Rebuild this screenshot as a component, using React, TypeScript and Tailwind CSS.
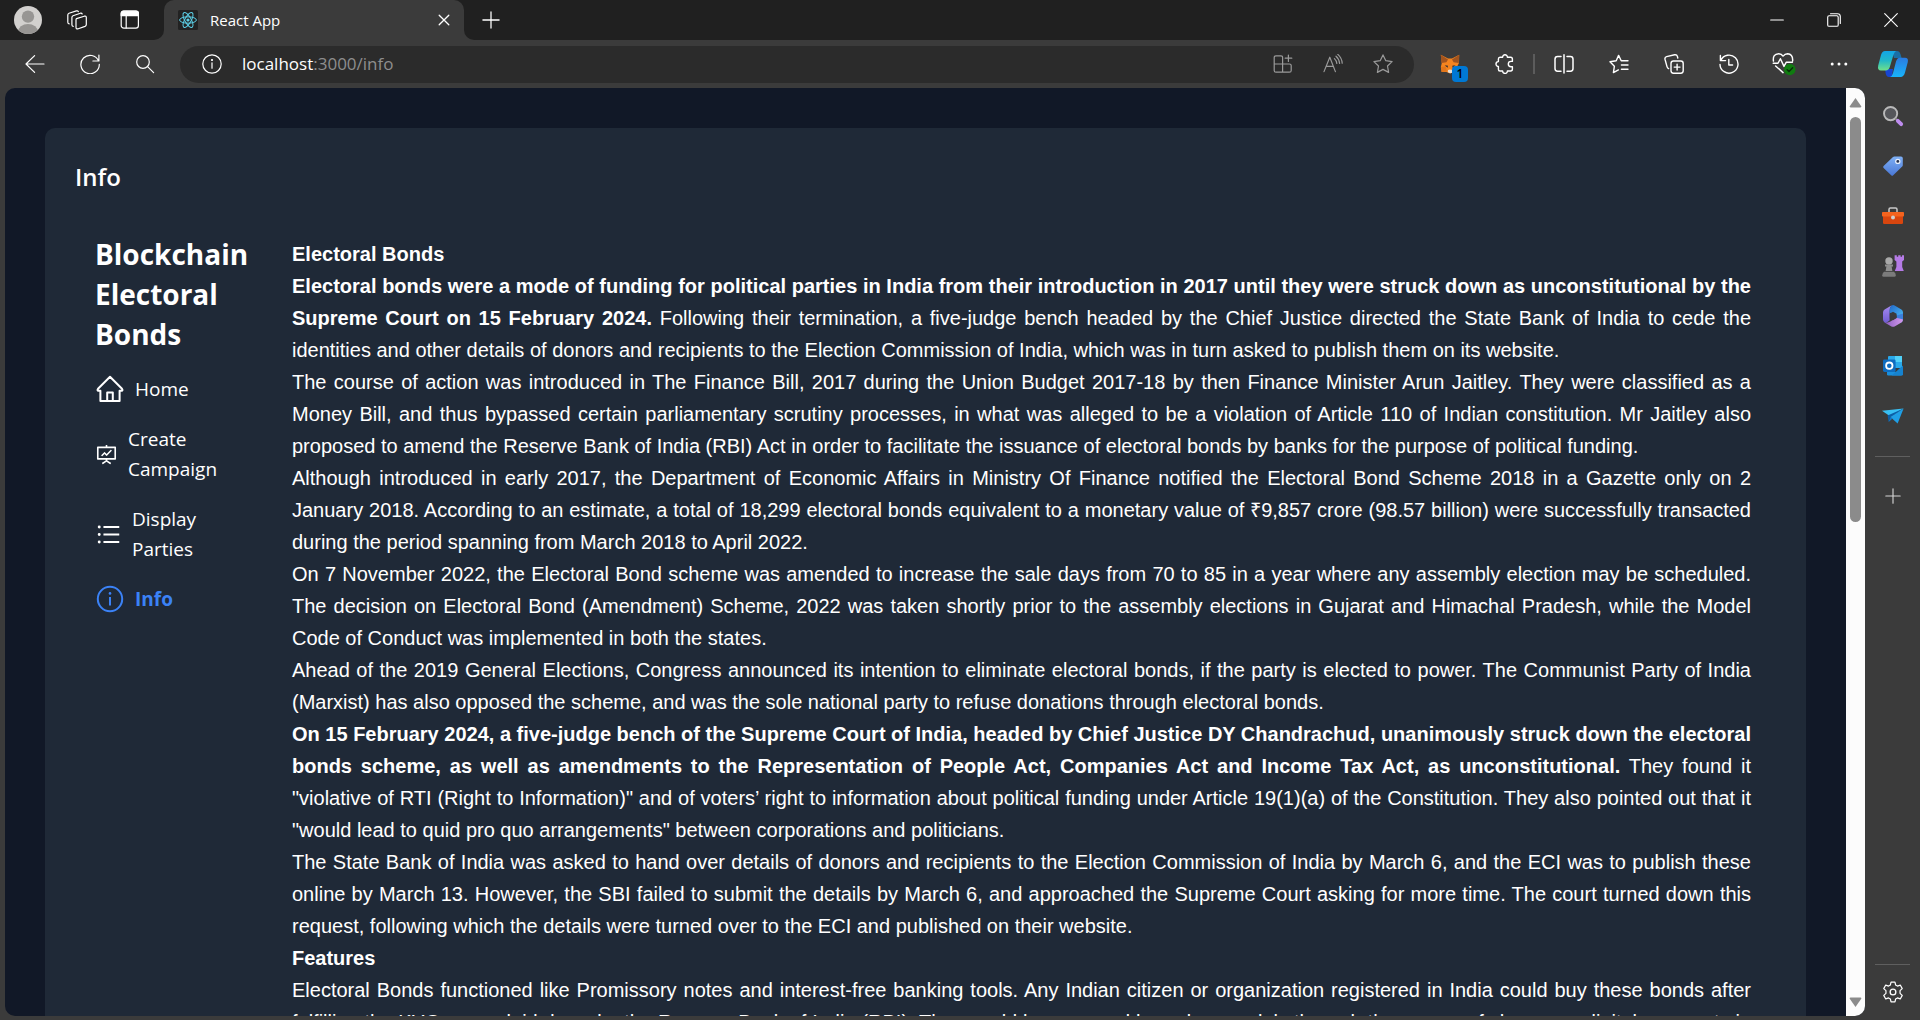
import React from "react";
import {
  AiOutlineFundProjectionScreen,
  AiOutlineUnorderedList,
} from "react-icons/ai";

type IconProps = { size?: number; className?: string; children: React.ReactNode };

function Icon({ size = 20, className = "", children }: IconProps) {
  return (
    <svg
      width={size}
      height={size}
      viewBox="0 0 20 20"
      fill="none"
      stroke="currentColor"
      strokeWidth={1.2}
      strokeLinecap="round"
      strokeLinejoin="round"
      className={`shrink-0 ${className}`}
      aria-hidden="true"
    >
      {children}
    </svg>
  );
}

const WorkspacesIcon = () => (
  <Icon>
    <path d="M9.5 8.6 17.2 6.2Q19.3 5.6 19.3 7.6V14.6Q19.3 15.9 18 16.4L11.3 18.8Q9 19.5 9 17.3V9.8Q9 8.9 9.5 8.6Z" />
    <path d="M6.2 16.4Q4.9 16.2 4.9 14.8V7.4Q4.9 6.2 6 5.7L13.4 3.2Q14.8 2.9 15.2 4" />
    <path d="M2.2 13.8Q.8 13.5.8 12.2V5Q.8 3.8 2 3.3L9.4.9Q10.8.5 11.3 1.6" />
  </Icon>
);

const TabActionsIcon = () => (
  <Icon>
    <rect x="1.2" y="1.2" width="17.2" height="17" rx="2.6" />
    <path d="M1.2 5.6V3.6A2.4 2.4 0 0 1 3.6 1.2H16A2.4 2.4 0 0 1 18.4 3.6V5.6Z" fill="currentColor" />
    <path d="M6.2 5.6V18" />
  </Icon>
);

const ReactLogo = () => (
  <svg width="20" height="20" viewBox="0 0 20 20" fill="none" stroke="#5ccfe6" strokeWidth="1" aria-hidden="true">
    <rect width="20" height="20" rx="1.5" fill="#222" stroke="none" />
    <ellipse cx="10" cy="10" rx="8.4" ry="3.2" />
    <ellipse cx="10" cy="10" rx="8.4" ry="3.2" transform="rotate(60 10 10)" />
    <ellipse cx="10" cy="10" rx="8.4" ry="3.2" transform="rotate(120 10 10)" />
    <circle cx="10" cy="10" r="1.6" fill="#5ccfe6" stroke="none" />
  </svg>
);

const BackIcon = () => (
  <Icon>
    <path d="M19 10H1M9.6 1.6 1 10l8.6 8.4" />
  </Icon>
);

const RefreshIcon = () => (
  <Icon>
    <path d="M18.6 7A9.2 9.2 0 1 0 19.3 10.4M18.9 1v6h-6" />
  </Icon>
);

const SearchIcon = () => (
  <Icon>
    <circle cx="8" cy="8" r="6.3" />
    <path d="m12.6 12.6 6 6" />
  </Icon>
);

const SiteInfoIcon = () => (
  <Icon>
    <circle cx="10" cy="10" r="9.2" />
    <path d="M10 8.8v5.4" />
    <circle cx="10" cy="6" r=".5" fill="currentColor" />
  </Icon>
);

const AppGridIcon = () => (
  <Icon>
    <path d="M9.6 10V3.4Q9.6 1.8 8 1.8H3Q1.2 1.8 1.2 3.6V16.4Q1.2 18.2 3 18.2H16.4Q18.2 18.2 18.2 16.4V11.6Q18.2 10 16.4 10H1.2M9.6 10V18.2" />
    <path d="M15.4 1V7.4M12.2 4.2H18.8" />
  </Icon>
);

const ReadAloudIcon = () => (
  <Icon>
    <path d="M1 17.6 6.8 3.2 12.4 17.6M3 12.4H10.5" />
    <path d="M11.4 4.6Q13.6 6.6 13.8 9.4M13 2.2Q16.2 5 16.6 9.4M14.8.4Q18.8 4 19.2 9.2" />
  </Icon>
);

const StarIcon = () => (
  <Icon>
    <path d="m10 .9 2.8 5.8 6.3.9-4.6 4.4 1.1 6.4-5.6-3-5.6 3 1.1-6.4L.9 7.6l6.3-.9Z" />
  </Icon>
);

const FoxIcon = () => (
  <svg width="20" height="20" viewBox="0 0 20 20" aria-hidden="true">
    <path d="M.8.8 8 4.6H12L19.2.8 19 9 17.2 12.5 18 17 13 18.5 10 19.4 6.5 18 1.6 18 .8 13 1.8 9Z" fill="#f5841f" />
    <path d="M.8.8 8 5.6 6.4 8.2 1.4 9ZM19.2.8 12 5.6 13.6 8.2 18.8 9Z" fill="#a2541f" />
    <path d="m4.6 11.4 3 .2.4 2.2ZM15.6 11.4l-3 .2-.4 2.2Z" fill="#2b2b35" />
    <path d="m8 16 2-.6 2.4.6.4 2.4-2.6.8-2.4-.9Z" fill="#e9dfd3" />
    <path d="M1 13 5.6 12.6 7 17.6 1.6 18Z" fill="#e2761b" />
  </svg>
);

const PuzzleIcon = () => (
  <Icon>
    <path
      strokeWidth="1.4"
      d="M7.6 3.2A2.4 2.4 0 1 1 12.4 3.2H15.6Q17.4 3.2 17.4 5V7.4H16A2.7 2.7 0 0 0 16 12.8H17.4V15Q17.4 17 15.6 17H12.4A2.4 2.4 0 1 1 7.6 17H5Q3.4 17 3.4 15.2V12.4A2.4 2.4 0 1 1 3.4 7.6V5Q3.4 3.2 5 3.2Z"
    />
  </Icon>
);

const SplitIcon = () => (
  <Icon>
    <path strokeWidth="1.5" d="M7 2.6H3.6Q1 2.6 1 5.2V14.6Q1 17.2 3.6 17.2H7M13 2.6H16.4Q19 2.6 19 5.2V14.6Q19 17.2 16.4 17.2H13M10 .8V19" />
  </Icon>
);

const FavoritesIcon = () => (
  <Icon>
    <path d="M12.2 6.8 9.6 1.4 7.2 6.8 1 7.8 5.4 12.2 4.4 18.6 9.4 15.9M12.4 6.8H19M12.4 11H19M12.4 15.2H19" strokeWidth="1.4" />
  </Icon>
);

const CollectionsIcon = () => (
  <Icon>
    <rect x="7" y="7" width="12.2" height="12.2" rx="2.4" strokeWidth="1.4" />
    <path d="M13.1 10.2V16M10.2 13.1H16M4.6 14.6Q3.4 14 3 12.6L1 5.2Q.6 3.2 2.6 2.6L10.6.8Q12.8.4 13.4 2.4L13.8 4" strokeWidth="1.4" />
  </Icon>
);

const HistoryIcon = () => (
  <Icon>
    <path d="M1.8 6.4A9 9 0 1 1 1 10.4M1.4 1.4V6.6H6.6M9.8 5.4V11H13.6" strokeWidth="1.4" />
  </Icon>
);

const HealthIcon = () => (
  <Icon size={24}>
    <path d="M1.2 7.6Q.4 1.6 5.6 1.4 8 1.4 9.2 3.4 10.8 1.4 13 1.4 17.6 1.8 17.2 7.4M3 11.6 9.2 17.2M1 9.4H5L7 5.6 10 12 11.8 8.6H17" />
    <circle cx="14.8" cy="14.6" r="4.8" fill="#107c10" stroke="none" />
    <path d="m12.6 14.8 1.6 1.5 3-3.2" stroke="#0a2e0a" />
  </Icon>
);

const MoreIcon = () => (
  <Icon>
    <g fill="currentColor" stroke="none">
      <circle cx="3.2" cy="10" r="1.5" />
      <circle cx="10" cy="10" r="1.5" />
      <circle cx="16.8" cy="10" r="1.5" />
    </g>
  </Icon>
);

const CopilotIcon = () => (
  <svg width="32" height="28" viewBox="0 0 32 28" aria-hidden="true">
    <defs>
      <linearGradient id="cpA" x1="0" y1="0" x2="0" y2="1">
        <stop offset="0" stopColor="#12a5e8" />
        <stop offset=".5" stopColor="#22b8c8" />
        <stop offset="1" stopColor="#6fe08a" />
      </linearGradient>
      <linearGradient id="cpB" x1="0" y1="0" x2="0" y2="1">
        <stop offset="0" stopColor="#2b7be0" />
        <stop offset="1" stopColor="#18b4fb" />
      </linearGradient>
    </defs>
    <path d="M15 1H20Q22.6 1 23.6 4.4L24.6 8H17Z" fill="#1a6fa6" />
    <path d="M8 19H16L14.8 27H12Q9.6 27 8.8 24Z" fill="#1746d2" />
    <path d="M8 1H19Q17.4 2 16.4 5L12.8 17Q11.8 20.4 8.8 20.4H4Q.2 20.4 1.2 15.4L4 5Q5.2 1 8 1Z" fill="url(#cpA)" />
    <path d="M22.6 7.8H28Q31.6 7.8 30.8 12L28 22.6Q26.8 27 23.6 27H13Q15.2 26.2 16 23L19 11.6Q20.2 8 22.6 7.8Z" fill="url(#cpB)" />
  </svg>
);

const SideSearchIcon = () => (
  <svg width="22" height="22" viewBox="0 0 22 22" fill="none" aria-hidden="true">
    <circle cx="8.6" cy="8.6" r="6.6" stroke="#b9b9b9" strokeWidth="1.9" fill="#55565a" />
    <path d="m13.4 13.4 2 2" stroke="#8a8a8a" strokeWidth="1.6" />
    <path d="m15.8 15.8 3.4 3.4" stroke="#bf8df0" strokeWidth="3.8" strokeLinecap="round" />
  </svg>
);

const TagIcon = () => (
  <svg width="22" height="22" viewBox="0 0 22 22" aria-hidden="true">
    <defs>
      <linearGradient id="tag" x1="0" y1="0" x2="0" y2="1">
        <stop offset="0" stopColor="#7fb0f5" />
        <stop offset="1" stopColor="#4a78d6" />
      </linearGradient>
    </defs>
    <path d="M12.4 1.4H19Q20.8 1.4 20.8 3.2V10Q20.8 11 20.2 11.6L11.2 20.2Q10.2 21.2 9.2 20.2L1.6 13Q.6 12 1.6 11L11 2Q11.6 1.4 12.4 1.4Z" fill="url(#tag)" />
    <circle cx="15.8" cy="6.4" r="2.7" fill="#e6eefb" />
    <circle cx="15.8" cy="6.4" r="1.4" fill="#26324f" />
  </svg>
);

const ToolboxIcon = () => (
  <svg width="22" height="20" viewBox="0 0 22 20" aria-hidden="true">
    <path d="M7 6V3.4Q7 2 8.4 2H13.6Q15 2 15 3.4V6" fill="none" stroke="#c9c9c9" strokeWidth="1.5" />
    <rect x="1" y="9" width="20" height="9" rx="1.2" fill="#d8460f" />
    <rect x="0" y="6" width="22" height="4.6" rx=".8" fill="#f4631e" />
    <circle cx="11" cy="11.4" r="2" fill="#cfcfcf" />
  </svg>
);

const GamesIcon = () => (
  <svg width="22" height="24" viewBox="0 0 22 24" aria-hidden="true">
    <path d="M12.6 1.2H14.8V2.8H16.2V1.2H18.6V2.8H20V1.2H22V6L20.2 7.6V13L21.8 17H12.8L14.4 13V7.6L12.6 6Z" fill="#b57be6" />
    <circle cx="7" cy="7" r="3.7" fill="#a9a9a9" />
    <path d="M3 10.6H11V12.4H9.6L10.4 17H3.6L4.4 12.4H3Z" fill="#8f8f8f" />
    <path d="M2 17.8H12Q14 19.4 13.8 21.4 13.6 22.8 12.4 22.8H1.6Q.2 22.8.2 21.4.4 19 2 17.8Z" fill="#7b7b7b" />
  </svg>
);

const M365Icon = () => (
  <svg width="22" height="24" viewBox="0 0 22 24" aria-hidden="true">
    <defs>
      <linearGradient id="mA" x1="0" y1="0" x2="0" y2="1">
        <stop offset="0" stopColor="#a58af0" />
        <stop offset="1" stopColor="#6f5bd0" />
      </linearGradient>
      <linearGradient id="mB" x1="0" y1="0" x2="1" y2="1">
        <stop offset="0" stopColor="#2068c8" />
        <stop offset="1" stopColor="#4fc0f6" />
      </linearGradient>
      <linearGradient id="mC" x1="0" y1="0" x2="1" y2="0">
        <stop offset="0" stopColor="#8a5cc0" />
        <stop offset="1" stopColor="#d49aec" />
      </linearGradient>
    </defs>
    <path d="M9.4 1.6 2.6 5.6Q1 6.6 1 8.4V15.6Q1 17.4 2.6 18.4L4 19 7.6 16.6V7Q7.6 3.6 9.4 1.6Z" fill="url(#mA)" />
    <path d="M9.4 1.6Q11 .6 12.6 1.4L19.4 5.4Q21 6.4 21 8.4V15.4L18.8 13.4 7.6 8.4V7Q7.6 3.6 9.4 1.6Z" fill="url(#mB)" />
    <path d="M14.6 11.4 21 9.6V15.6Q21 17.4 19.4 18.4L16 18.4 14.6 16Z" fill="#3c7fdc" />
    <path d="M2.6 18.4 9.4 22.4Q11 23.2 12.6 22.4L19.4 18.4Q21 17.4 21 15.4L14.6 13.8 8.4 17.6Q5.4 19.2 2.6 18.4Z" fill="url(#mC)" />
    <path d="M7.8 9.6 11 7.8 14.6 9.8V14L11 16.2 7.8 14.4Z" fill="#3b3b3b" />
  </svg>
);

const OutlookIcon = () => (
  <svg width="22" height="22" viewBox="0 0 22 22" aria-hidden="true">
    <rect x="6" y="1" width="14" height="12" rx="1" fill="#2aa9ea" />
    <rect x="13" y="1" width="7" height="6" fill="#50d0f8" />
    <path d="M5 12 20 20.4H6.2Q5 20.4 5 19.2Z" fill="#1a8fdc" />
    <path d="M21 10.6V19.2Q21 20.4 19.8 20.4H9.6Z" fill="#1683d0" />
    <rect x="1" y="4.4" width="12.6" height="12.6" rx="1.4" fill="#0f6cbf" />
    <circle cx="7.3" cy="10.7" r="3.2" fill="none" stroke="#fff" strokeWidth="1.8" />
  </svg>
);

const PlaneIcon = () => (
  <svg width="22" height="16" viewBox="0 0 22 16" aria-hidden="true">
    <path d="M0 2.8 21.6.4 8 8.2Z" fill="#38c0f4" />
    <path d="M5.6 7.4 21.6.4 8 9.4 6.6 14Z" fill="#0b5ea8" />
    <path d="M8.4 9 21.6.4 15.6 15.6Z" fill="#1f9fe6" />
    <path d="m6.6 14 4-3.4-2.4-1.6Z" fill="#1277c4" />
  </svg>
);

const GearIcon = () => (
  <Icon size={22}>
    <path
      strokeWidth="1.1"
      d="M8.2 1h3.6l.6 2.7 1.6.9 2.6-.9 1.8 3.2-2 1.9v2.4l2 1.9-1.8 3.2-2.6-.9-1.6.9-.6 2.7H8.2l-.6-2.7-1.6-.9-2.6.9-1.8-3.2 2-1.9V8.8l-2-1.9 1.8-3.2 2.6.9 1.6-.9Z"
    />
    <circle cx="10" cy="10" r="2.6" />
  </Icon>
);

const PlusIcon = ({ size = 18 }: { size?: number }) => (
  <Icon size={size}>
    <path d="M10 1v18M1 10h18" strokeWidth="1.4" />
  </Icon>
);

const HomeIcon = () => (
  <svg width="30" height="30" viewBox="0 0 30 30" fill="none" stroke="currentColor" strokeWidth="2" strokeLinejoin="round" className="shrink-0" aria-hidden="true">
    <path d="M5.4 27V16.8H3.6Q1.8 16.4 3 14.8L15 2.8 27 14.8Q28.2 16.4 26.4 16.8H24.6V27Z" />
    <path d="M12.2 27V18.6H17.8V27" />
  </svg>
);

const InfoIcon = () => (
  <svg width="30" height="30" viewBox="0 0 30 30" fill="none" stroke="currentColor" strokeWidth="2" className="shrink-0" aria-hidden="true">
    <circle cx="15" cy="15" r="12.2" />
    <path d="M15 13V21.4" />
    <circle cx="15" cy="9.4" r="1.3" fill="currentColor" stroke="none" />
  </svg>
);

function ToolButton({ label, children }: { label: string; children: React.ReactNode }) {
  return (
    <button type="button" aria-label={label} className="flex h-10 w-[55px] shrink-0 items-center justify-center">
      {children}
    </button>
  );
}

function TabStrip() {
  return (
    <header className="flex h-10 shrink-0 items-stretch bg-[#3b3b3b] text-white">
      <div className="flex w-[164px] items-center rounded-br-[10px] bg-[#202020] pl-[14px]">
        <button type="button" aria-label="Profile">
          <svg width="28" height="28" viewBox="0 0 28 28" aria-hidden="true">
            <defs>
              <clipPath id="avatar">
                <circle cx="14" cy="14" r="14" />
              </clipPath>
            </defs>
            <g clipPath="url(#avatar)">
              <rect width="28" height="28" fill="#d2d0ce" />
              <circle cx="14" cy="10.6" r="6.2" fill="#979593" />
              <ellipse cx="14" cy="26" rx="10" ry="8" fill="#979593" />
            </g>
          </svg>
        </button>
        <button type="button" aria-label="Workspaces" className="ml-[25px]">
          <WorkspacesIcon />
        </button>
        <button type="button" aria-label="Tab actions" className="ml-[33px]">
          <TabActionsIcon />
        </button>
      </div>
      <div className="w-[300px] bg-[#202020]">
        <div className="flex h-full items-center rounded-t-[10px] bg-[#3b3b3b] pr-[12px] pl-[14px]">
          <ReactLogo />
          <span className="ml-3 flex-1 text-[15px]">React App</span>
          <button type="button" aria-label="Close tab" className="flex size-4 items-center justify-center">
            <Icon size={12}>
              <path d="m2 2 16 16M18 2 2 18" strokeWidth="2.2" />
            </Icon>
          </button>
        </div>
      </div>
      <div className="flex flex-1 rounded-bl-[10px] bg-[#202020]">
        <button type="button" aria-label="New tab" className="flex w-[54px] items-center justify-center">
          <PlusIcon />
        </button>
        <div className="ml-auto flex">
          <button type="button" aria-label="Minimize" className="flex w-[57px] items-center justify-center">
            <Icon size={14}>
              <path d="M1 10h18" strokeWidth="1.6" />
            </Icon>
          </button>
          <button type="button" aria-label="Restore" className="flex w-[57px] items-center justify-center">
            <Icon size={14}>
              <rect x="1" y="4" width="15" height="15" rx="2" strokeWidth="1.6" />
              <path d="M5 1H15Q19 1 19 5V15" strokeWidth="1.6" />
            </Icon>
          </button>
          <button type="button" aria-label="Close" className="flex w-[58px] items-center justify-center">
            <Icon size={14}>
              <path d="m1 1 18 18M19 1 1 19" strokeWidth="1.6" />
            </Icon>
          </button>
        </div>
      </div>
    </header>
  );
}

function Toolbar() {
  return (
    <div className="flex h-12 shrink-0 items-center pl-[7px] text-white">
      <ToolButton label="Back">
        <BackIcon />
      </ToolButton>
      <ToolButton label="Refresh">
        <RefreshIcon />
      </ToolButton>
      <ToolButton label="Search">
        <SearchIcon />
      </ToolButton>
      <div className="ml-2 flex h-[37px] min-w-0 flex-1 items-center rounded-full bg-[#2b2b2b] pr-[6px] pl-[22px]">
        <button type="button" aria-label="Site information">
          <SiteInfoIcon />
        </button>
        <a href="#url" className="ml-5 flex-1 text-[17px] text-[#8e8e8e]">
          <span className="text-white">localhost</span>:3000/info
        </a>
        <div className="flex text-[#9a9a9a]">
          <button type="button" aria-label="App available" className="flex w-[50px] justify-center">
            <AppGridIcon />
          </button>
          <button type="button" aria-label="Read aloud" className="flex w-[50px] justify-center">
            <ReadAloudIcon />
          </button>
          <button type="button" aria-label="Add to favorites" className="flex w-[50px] justify-center">
            <StarIcon />
          </button>
        </div>
      </div>
      <div className="ml-2 flex items-center">
        <button type="button" aria-label="MetaMask" className="relative flex h-10 w-[55px] items-center justify-center">
          <FoxIcon />
          <span className="absolute right-[9px] bottom-[2px] flex size-4 items-center justify-center rounded-[4px] bg-[#0078d4] text-[12px] font-semibold text-black">
            1
          </span>
        </button>
        <ToolButton label="Extensions">
          <PuzzleIcon />
        </ToolButton>
        <span className="mx-px h-5 w-[2px] bg-[#5c5c5c]" />
        <ToolButton label="Split screen">
          <SplitIcon />
        </ToolButton>
        <ToolButton label="Favorites">
          <FavoritesIcon />
        </ToolButton>
        <ToolButton label="Collections">
          <CollectionsIcon />
        </ToolButton>
        <ToolButton label="History">
          <HistoryIcon />
        </ToolButton>
        <ToolButton label="Browser essentials">
          <HealthIcon />
        </ToolButton>
        <ToolButton label="Settings and more">
          <MoreIcon />
        </ToolButton>
        <button type="button" aria-label="Copilot" className="flex w-[54px] justify-center">
          <CopilotIcon />
        </button>
      </div>
    </div>
  );
}

function Scrollbar() {
  return (
    <div className="flex w-[19px] shrink-0 flex-col items-center bg-[#fcfcfc] pt-[9px] pb-2 text-[#8b8b8b]">
      <svg width="13" height="11" viewBox="0 0 13 11" aria-hidden="true">
        <path d="M6.5 1 12.4 9.6Q12.4 10.4 11.4 10.4H1.6Q.6 10.4.6 9.6Z" fill="currentColor" />
      </svg>
      <div className="mt-[9px] flex w-[11px] flex-1">
        <div className="h-[46%] w-full rounded-full bg-[#8b8b8b]" />
      </div>
      <svg width="13" height="11" viewBox="0 0 13 11" aria-hidden="true">
        <path d="M6.5 10 .6 1.4Q.6.6 1.6.6H11.4Q12.4.6 12.4 1.4Z" fill="currentColor" />
      </svg>
    </div>
  );
}

const sideTools = [
  { label: "Search", icon: <SideSearchIcon /> },
  { label: "Shopping", icon: <TagIcon /> },
  { label: "Tools", icon: <ToolboxIcon /> },
  { label: "Games", icon: <GamesIcon /> },
  { label: "Microsoft 365", icon: <M365Icon /> },
  { label: "Outlook", icon: <OutlookIcon /> },
  { label: "Drop", icon: <PlaneIcon /> },
];

function SideRail() {
  return (
    <aside className="flex w-[55px] shrink-0 flex-col items-center pt-[3px] text-[#d6d6d6]">
      {sideTools.map((tool) => (
        <button key={tool.label} type="button" aria-label={tool.label} className="flex h-[50px] w-full shrink-0 items-center justify-center">
          {tool.icon}
        </button>
      ))}
      <hr className="mt-[15px] w-[35px] border-[#5f5f5f]" />
      <button type="button" aria-label="Customize" className="mt-[31px]">
        <PlusIcon size={16} />
      </button>
      <hr className="mt-auto w-[35px] border-[#5f5f5f]" />
      <button type="button" aria-label="Settings" className="mt-4 mb-[17px] text-white">
        <GearIcon />
      </button>
    </aside>
  );
}

function Navigation() {
  return (
    <nav className="w-[157px] shrink-0">
      <h2 className="text-[28px] leading-10 font-bold">
        Blockchain Electoral Bonds
      </h2>
      <ul className="mt-5 flex flex-col gap-5 text-[19px] leading-[30px]">
        <li>
          <a href="#home" className="flex items-center gap-[10px]">
            <HomeIcon />
            Home
          </a>
        </li>
        <li>
          <a href="#create" className="flex items-center gap-[10px]">
            <AiOutlineFundProjectionScreen size={23} className="shrink-0" />
            Create Campaign
          </a>
        </li>
        <li>
          <a href="#display" className="flex items-center gap-[10px]">
            <AiOutlineUnorderedList size={27} className="shrink-0" />
            <span className="w-20">Display Parties</span>
          </a>
        </li>
        <li>
          <a href="#info" className="flex items-center gap-[10px] font-bold text-[#3b82f6]" aria-current="page">
            <InfoIcon />
            Info
          </a>
        </li>
      </ul>
    </nav>
  );
}

function Article() {
  return (
    <article className="min-w-0 flex-1 pt-1 text-justify font-['Liberation_Sans',Arial,sans-serif] text-[20px] leading-8">
      <h3 className="font-bold">Electoral Bonds</h3>
      <p>
        <strong>
          Electoral bonds were a mode of funding for political parties in India from their introduction in 2017 until
          they were struck down as unconstitutional by the Supreme Court on 15 February 2024.
        </strong>{" "}
        Following their termination, a five-judge bench headed by the Chief Justice directed the State Bank of India to
        cede the identities and other details of donors and recipients to the Election Commission of India, which was in
        turn asked to publish them on its website.
      </p>
      <p>
        The course of action was introduced in The Finance Bill, 2017 during the Union Budget 2017-18 by then Finance
        Minister Arun Jaitley. They were classified as a Money Bill, and thus bypassed certain parliamentary scrutiny
        processes, in what was alleged to be a violation of Article 110 of Indian constitution. Mr Jaitley also proposed
        to amend the Reserve Bank of India (RBI) Act in order to facilitate the issuance of electoral bonds by banks for
        the purpose of political funding.
      </p>
      <p>
        Although introduced in early 2017, the Department of Economic Affairs in Ministry Of Finance notified the
        Electoral Bond Scheme 2018 in a Gazette only on 2 January 2018. According to an estimate, a total of 18,299
        electoral bonds equivalent to a monetary value of ₹9,857 crore (98.57 billion) were successfully transacted
        during the period spanning from March 2018 to April 2022.
      </p>
      <p>
        On 7 November 2022, the Electoral Bond scheme was amended to increase the sale days from 70 to 85 in a year where
        any assembly election may be scheduled. The decision on Electoral Bond (Amendment) Scheme, 2022 was taken shortly
        prior to the assembly elections in Gujarat and Himachal Pradesh, while the Model Code of Conduct was implemented
        in both the states.
      </p>
      <p>
        Ahead of the 2019 General Elections, Congress announced its intention to eliminate electoral bonds, if the party
        is elected to power. The Communist Party of India (Marxist) has also opposed the scheme, and was the sole
        national party to refuse donations through electoral bonds.
      </p>
      <p>
        <strong>
          On 15 February 2024, a five-judge bench of the Supreme Court of India, headed by Chief Justice DY Chandrachud,
          unanimously struck down the electoral bonds scheme, as well as amendments to the Representation of People Act,
          Companies Act and Income Tax Act, as unconstitutional.
        </strong>{" "}
        They found it "violative of RTI (Right to Information)" and of voters’ right to information about political
        funding under Article 19(1)(a) of the Constitution. They also pointed out that it "would lead to quid pro quo
        arrangements" between corporations and politicians.
      </p>
      <p>
        The State Bank of India was asked to hand over details of donors and recipients to the Election Commission of
        India by March 6, and the ECI was to publish these online by March 13. However, the SBI failed to submit the
        details by March 6, and approached the Supreme Court asking for more time. The court turned down this request,
        following which the details were turned over to the ECI and published on their website.
      </p>
      <h3 className="font-bold">Features</h3>
      <p>
        Electoral Bonds functioned like Promissory notes and interest-free banking tools. Any Indian citizen or
        organization registered in India could buy these bonds after fulfilling the KYC norms laid down by the Reserve
        Bank of India (RBI). They could be procured by a donor solely through the means of cheque or digital
        payments in various denominations.
      </p>
    </article>
  );
}

export default function App() {
  return (
    <div className="flex h-screen flex-col overflow-hidden bg-[#3b3b3b] font-['Open_Sans','Noto_Sans',sans-serif]">
      <TabStrip />
      <Toolbar />
      <div className="flex min-h-0 flex-1">
        <div className="mb-1 ml-[5px] flex min-w-0 flex-1 overflow-hidden rounded-[10px] bg-[#111827] text-white">
          <main className="min-w-0 flex-1 overflow-hidden px-10 pt-10">
            <section className="rounded-[10px] bg-[#1f2937] pr-[55px] pb-10 pl-[50px]">
              <h1 className="-ml-5 pt-[30px] text-[24px] leading-[38px] font-semibold">Info</h1>
              <div className="mt-[38px] flex gap-10">
                <Navigation />
                <Article />
              </div>
            </section>
          </main>
          <Scrollbar />
        </div>
        <SideRail />
      </div>
    </div>
  );
}
